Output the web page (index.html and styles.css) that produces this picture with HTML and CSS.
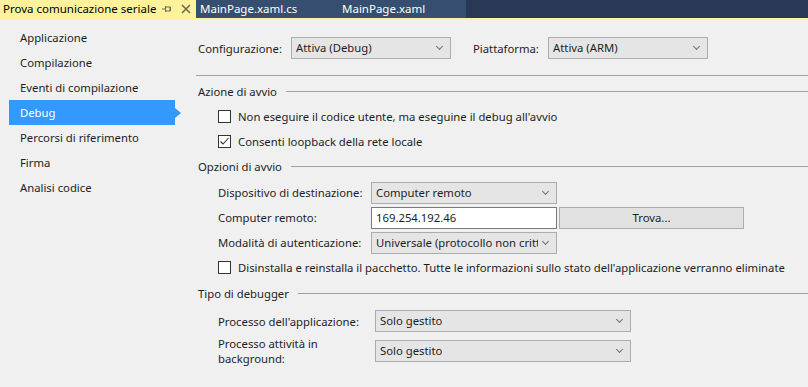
FILE: index.html
```html
<!DOCTYPE html>
<html lang="it">
<head>
  <meta charset="UTF-8" />
  <title>Prova comunicazione seriale</title>
  <link rel="stylesheet" href="styles.css">
</head>
<body>
  <!-- TABS -->
  <div class="tabbar">
    <div class="tab active">
      <span class="tab-title">Prova comunicazione seriale</span>
      <svg class="pin" width="10" height="8" viewBox="0 0 10 8">
        <path d="M0 4H3M3.5 1V7M3.5 2H8.5V6H3.5M8 2V6" fill="none" stroke="#6d6a52" stroke-width="1"/>
      </svg>
      <svg class="close" width="10" height="10" viewBox="0 0 10 10">
        <path d="M1 1L9 9M9 1L1 9" stroke="#6d6a52" stroke-width="1.6"/>
      </svg>
    </div>
    <div class="tab doc">MainPage.xaml.cs</div>
    <div class="tab doc second">MainPage.xaml</div>
  </div>

  <div class="main">
    <!-- SIDEBAR -->
    <ul class="sidebar">
      <li>Applicazione</li>
      <li>Compilazione</li>
      <li>Eventi di compilazione</li>
      <li class="selected">Debug</li>
      <li>Percorsi di riferimento</li>
      <li>Firma</li>
      <li>Analisi codice</li>
    </ul>

    <!-- CONTENT -->
    <div class="content">
      <div class="config-row">
        <span class="config-label">Configurazione:</span>
        <div class="select config"><span>Attiva (Debug)</span></div>
        <span class="platform-label">Piattaforma:</span>
        <div class="select config"><span>Attiva (ARM)</span></div>
      </div>
      <div class="separator"></div>

      <div class="group-title"><span>Azione di avvio</span></div>
      <div class="check-row"><span class="checkbox"></span>Non eseguire il codice utente, ma eseguine il debug all'avvio</div>
      <div class="check-row">
        <span class="checkbox">
          <svg width="11" height="11" viewBox="0 0 11 11"><path d="M1.5 5.5L4 8L9.5 2" fill="none" stroke="#333" stroke-width="1.1"/></svg>
        </span>Consenti loopback della rete locale
      </div>

      <div class="group-title"><span>Opzioni di avvio</span></div>
      <div class="options-grid">
        <span>Dispositivo di destinazione:</span>
        <div class="select"><span>Computer remoto</span></div>
        <span></span><span></span>

        <span>Computer remoto:</span>
        <div class="textbox">169.254.192.46</div>
        <span></span>
        <div class="button">Trova...</div>

        <span>Modalità di autenticazione:</span>
        <div class="select"><span>Universale (protocollo non crittografato)</span></div>
        <span></span><span></span>
      </div>
      <div class="check-row"><span class="checkbox"></span>Disinstalla e reinstalla il pacchetto. Tutte le informazioni sullo stato dell'applicazione verranno eliminate</div>

      <div class="group-title debugger"><span>Tipo di debugger</span></div>
      <div class="debugger-row first">
        <span class="debugger-label">Processo dell'applicazione:</span>
        <div class="select wide"><span>Solo gestito</span></div>
      </div>
      <div class="debugger-row">
        <span class="debugger-label two-lines">Processo attività in<br>background:</span>
        <div class="select wide"><span>Solo gestito</span></div>
      </div>
    </div>
  </div>
</body>
</html>
```

FILE: styles.css
```css
body {
  margin: 0;
  font-family: "Noto Sans", "Open Sans", sans-serif;
  font-size: 11.3px;
  color: #1e1e1e;
  background: #f0f0f0;
  width: 808px;
  height: 387px;
  overflow: hidden;
}

/* TABS */
.tabbar {
  display: flex;
  height: 18px;
  background: #293955;
  border-bottom: 2px solid #fff29d;
}

.tab {
  display: flex;
  align-items: center;
  line-height: 18px;
  white-space: nowrap;
  font-size: 11.5px;
}

.tab.active {
  width: 196px;
  box-sizing: border-box;
  padding-left: 3px;
  background: #fff29d;
  color: #000;
}

.tab-title {
  width: 159px;
  overflow: hidden;
}

.pin {
  margin-right: 9px;
}

.tab.doc {
  background: #364e6f;
  color: #fff;
  width: 130px;
  padding-left: 4px;
  box-sizing: border-box;
}

.tab.doc.second {
  width: 140px;
  padding-left: 16px;
}

/* LAYOUT */
.main {
  display: flex;
}

.sidebar {
  list-style: none;
  margin: 0;
  padding: 5px 0 0 9px;
  width: 187px;
  flex-shrink: 0;
  box-sizing: border-box;
}

.sidebar li {
  position: relative;
  width: 166px;
  height: 25px;
  line-height: 25px;
  padding-left: 11px;
  box-sizing: border-box;
}

.sidebar li.selected {
  background: #3399ff;
  color: #fff;
}

.sidebar li.selected::after {
  content: "";
  position: absolute;
  right: -6px;
  top: 8px;
  border-left: 6px solid #3399ff;
  border-top: 5px solid transparent;
  border-bottom: 5px solid transparent;
}

.content {
  flex: 1;
  min-width: 0;
  padding-left: 11px;
}

/* CONTROLS */
.select, .textbox, .button {
  height: 22px;
  line-height: 20px;
  box-sizing: border-box;
  border: 1px solid #acacac;
  background: #e5e5e5;
  padding-left: 4px;
  white-space: nowrap;
  overflow: hidden;
}

.select {
  position: relative;
  display: flex;
  padding-right: 18px;
}

.select > span {
  overflow: hidden;
}

.select::after {
  content: "";
  position: absolute;
  right: 8px;
  top: 6px;
  width: 4px;
  height: 4px;
  border-right: 1px solid #707070;
  border-bottom: 1px solid #707070;
  transform: rotate(45deg);
}

.textbox {
  background: #fff;
  border-color: #7a7a7a;
}

.button {
  background: #e1e1e1;
  border-color: #adadad;
  text-align: center;
  padding-left: 0;
}

/* CONFIG ROW */
.config-row {
  display: flex;
  align-items: center;
  margin-top: 17px;
}

.config-label {
  width: 93px;
}

.select.config {
  width: 160px;
}

.platform-label {
  margin-left: 22px;
  width: 75px;
}

.separator {
  height: 1px;
  background: #a0a0a0;
  margin: 16px 0 3px -2px;
}

/* GROUPS */
.group-title {
  display: flex;
  align-items: center;
  height: 25px;
}

.group-title::after {
  content: "";
  flex: 1;
  height: 1px;
  background: #a0a0a0;
  margin-left: 9px;
}

.check-row {
  display: flex;
  align-items: center;
  height: 25px;
  padding-left: 20px;
  white-space: nowrap;
}

.checkbox {
  width: 13px;
  height: 13px;
  flex-shrink: 0;
  box-sizing: border-box;
  border: 1px solid #333;
  background: #fff;
  margin-right: 7px;
  display: flex;
  align-items: center;
  justify-content: center;
}

.options-grid {
  display: grid;
  grid-template-columns: 153px 186px 2px 185px;
  grid-auto-rows: 25px;
  align-items: center;
  padding-left: 20px;
  margin-top: 1px;
  white-space: nowrap;
}

/* DEBUGGER */
.group-title.debugger {
  margin-top: 1px;
}

.debugger-row {
  display: flex;
  align-items: center;
  padding-left: 20px;
  height: 30px;
}

.debugger-label {
  width: 157px;
  flex-shrink: 0;
}

.two-lines {
  line-height: 15px;
}

.select.wide {
  width: 256px;
}
```
